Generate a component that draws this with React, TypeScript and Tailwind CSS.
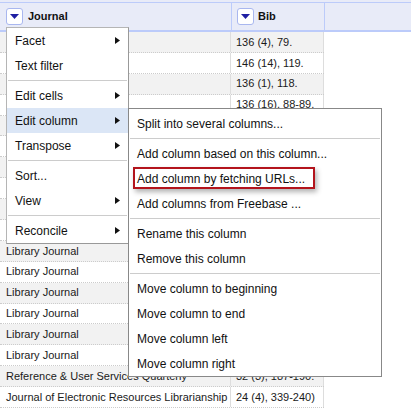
import React from "react";

type Item = { label: string; arrow?: boolean; active?: boolean; boxed?: boolean } | "sep";

const rows: [string, string][] = [
  ["Library Journal", "136 (4), 79."],
  ["Library Journal", "146 (14), 119."],
  ["Library Journal", "136 (1), 118."],
  ["Library Journal", "136 (16), 88-89."],
  ["Library Journal", "136 (2), 105."],
  ["Library Journal", "135 (20), 74."],
  ["Library Journal", "136 (9), 112."],
  ["Library Journal", "146 (3), 96."],
  ["Library Journal", "136 (11), 101."],
  ["Library Journal", "135 (18), 88."],
  ["Library Journal", "136 (7), 94."],
  ["Library Journal", "146 (5), 120."],
  ["Library Journal", "136 (13), 90."],
  ["Library Journal", "135 (15), 82."],
  ["Library Journal", "136 (6), 117."],
  ["Library Journal", "146 (8), 103."],
  ["Reference & User Services Quarterly", "32 (3), 187-190."],
  ["Journal of Electronic Resources Librarianship", "24 (4), 339-240)"],
];

const mainMenu: Item[] = [
  { label: "Facet", arrow: true },
  { label: "Text filter" },
  "sep",
  { label: "Edit cells", arrow: true },
  { label: "Edit column", arrow: true, active: true },
  { label: "Transpose", arrow: true },
  "sep",
  { label: "Sort..." },
  { label: "View", arrow: true },
  "sep",
  { label: "Reconcile", arrow: true },
];

const subMenu: Item[] = [
  { label: "Split into several columns..." },
  "sep",
  { label: "Add column based on this column..." },
  { label: "Add column by fetching URLs...", boxed: true },
  { label: "Add columns from Freebase ..." },
  "sep",
  { label: "Rename this column" },
  { label: "Remove this column" },
  "sep",
  { label: "Move column to beginning" },
  { label: "Move column to end" },
  { label: "Move column left" },
  { label: "Move column right" },
];

function DropButton() {
  return (
    <div className="flex h-[17px] w-[17px] items-center justify-center rounded-[3px] border border-[#a9b7ef] bg-white">
      <svg width="9" height="5" viewBox="0 0 9 5">
        <polygon points="0,0 9,0 4.5,5" fill="#1f1fa3" />
      </svg>
    </div>
  );
}

function MenuItems({ items }: { items: Item[] }) {
  return (
    <>
      {items.map((it, i) =>
        it === "sep" ? (
          <div key={i} className="mx-px flex h-[5px] items-center">
            <div className="h-px w-full bg-[#cccccc]" />
          </div>
        ) : (
          <div
            key={i}
            className={`relative flex h-[25px] items-center justify-between whitespace-nowrap px-2 ${
              it.active ? "bg-[#dbe6f6]" : ""
            }`}
          >
            <span>{it.label}</span>
            {it.arrow && (
              <svg width="5" height="7" viewBox="0 0 5 7">
                <polygon points="0,0 5,3.5 0,7" fill="#111" />
              </svg>
            )}
            {it.boxed && (
              <div className="absolute left-[4px] top-[1px] h-[22px] w-[182px] border-2 border-[#b3141c] shadow-[2px_3px_5px_rgba(0,0,0,0.3)]" />
            )}
          </div>
        )
      )}
    </>
  );
}

export default function App() {
  return (
    <div className="relative h-[409px] w-[411px] overflow-hidden bg-white font-['Liberation_Sans',Arial,sans-serif] text-[#111]">
      {/* column headers */}
      <div className="bg-[#e8ebf8] pt-[2px]">
        <div className="flex h-[30px] border-b-2 border-t border-[#bccbfa] text-[11px] font-bold">
          <div className="flex w-[231px] items-center gap-[5px] pl-[6px]">
            <DropButton />
            <span>Journal</span>
          </div>
          <div className="flex w-[93px] items-center gap-[4px] border-l border-[#bccbfa] pl-[5px]">
            <DropButton />
            <span>Bib</span>
          </div>
          <div className="flex-1 border-l border-[#bccbfa]" />
        </div>
      </div>

      {/* rows */}
      <div className="w-[324px] text-[11px] text-[#1a1a1a]">
        {rows.map(([journal, bib], i) => (
          <div
            key={i}
            className={`flex h-[20.9px] border-b border-dotted border-[#cccccc] ${
              i % 2 === 0 ? "bg-[#f2f2f2]" : "bg-white"
            }`}
          >
            <div className="flex w-[231px] items-center overflow-hidden whitespace-nowrap border-r border-solid border-[#dddddd] pl-[6px]">
              {journal}
            </div>
            <div className="flex w-[93px] items-center overflow-hidden whitespace-nowrap border-r border-solid border-[#dddddd] pl-[5px]">
              {bib}
            </div>
          </div>
        ))}
      </div>

      {/* column menu */}
      <div className="absolute left-[6px] top-[27px] w-[123px] border border-[#999] border-l-[#b5b5b5] border-t-[#b5b5b5] bg-white text-[12px]">
        <MenuItems items={mainMenu} />
      </div>

      {/* Edit column submenu */}
      <div className="absolute left-[128px] top-[108px] w-[254px] border border-[#888] bg-white pt-[2px] text-[12px]">
        <MenuItems items={subMenu} />
      </div>
    </div>
  );
}
